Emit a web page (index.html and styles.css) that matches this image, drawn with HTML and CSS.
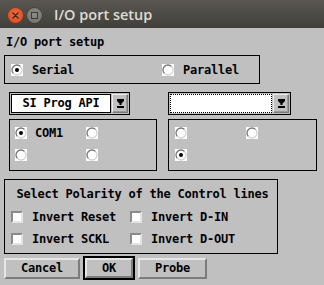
FILE: index.html
```html
<!DOCTYPE html>
<html>
<head>
<meta charset="utf-8">
<link rel="stylesheet" href="styles.css">
</head>
<body>
<div class="window">
  <div class="titlebar">
    <span class="wbtn close"><svg width="15" height="15" viewBox="0 0 15 15"><path d="M5 5L10 10M10 5L5 10" stroke="#3a2a22" stroke-width="1.4" stroke-linecap="round"/></svg></span>
    <span class="wbtn minim"><svg width="15" height="15" viewBox="0 0 15 15"><rect x="4.5" y="4.5" width="6" height="6" fill="none" stroke="#3c3b37" stroke-width="1"/></svg></span>
    <span class="title">I/O port setup</span>
  </div>
  <div class="content">
    <div class="heading">I/O port setup</div>

    <div class="frame serial-frame">
      <label class="opt"><span class="radio on"></span><span>Serial</span></label>
      <label class="opt"><span class="radio"></span><span>Parallel</span></label>
    </div>

    <div class="combo-row">
      <div class="combo c1">
        <div class="field">SI Prog API</div>
        <div class="arrow"><svg width="7" height="9" viewBox="0 0 7 9"><path d="M0 0H7V2L4.5 4.5V6H2.5V4.5L0 2Z" fill="#000"/><rect x="0" y="7" width="7" height="2" fill="#000"/></svg></div>
      </div>
      <div class="combo c2">
        <div class="field focus"></div>
        <div class="arrow"><svg width="7" height="9" viewBox="0 0 7 9"><path d="M0 0H7V2L4.5 4.5V6H2.5V4.5L0 2Z" fill="#000"/><rect x="0" y="7" width="7" height="2" fill="#000"/></svg></div>
      </div>
    </div>

    <div class="group-row">
      <div class="frame ports p1">
        <label class="opt"><span class="radio on"></span><span>COM1</span></label>
        <label class="opt"><span class="radio"></span></label>
        <label class="opt"><span class="radio"></span></label>
        <label class="opt"><span class="radio"></span></label>
      </div>
      <div class="frame ports p2">
        <label class="opt"><span class="radio"></span></label>
        <label class="opt"><span class="radio"></span></label>
        <label class="opt"><span class="radio on"></span></label>
      </div>
    </div>

    <div class="frame polarity">
      <div class="ptitle">Select Polarity of the Control lines</div>
      <div class="checks">
        <label class="opt"><span class="check"></span><span>Invert Reset</span></label>
        <label class="opt"><span class="check"></span><span>Invert D-IN</span></label>
        <label class="opt"><span class="check"></span><span>Invert SCKL</span></label>
        <label class="opt"><span class="check"></span><span>Invert D-OUT</span></label>
      </div>
    </div>

    <div class="buttons">
      <div class="btn cancel">Cancel</div>
      <div class="default"><div class="btn ok">OK</div></div>
      <div class="btn probe">Probe</div>
    </div>
  </div>
</div>
</body>
</html>
```

FILE: styles.css
```css
html, body {
  margin: 0;
  padding: 0;
}
body {
  width: 324px;
  height: 285px;
  overflow: hidden;
  background: #c0c0c0;
}
.window {
  width: 324px;
  height: 285px;
  background: #c0c0c0;
  font-family: "DejaVu Sans Mono", "Liberation Mono", monospace;
  font-weight: bold;
  font-size: 12px;
  letter-spacing: -0.22px;
  color: #000;
}
.titlebar {
  height: 28px;
  display: flex;
  align-items: center;
  background: linear-gradient(to bottom, #5a5751, #403f3b);
  box-sizing: border-box;
  padding-left: 8px;
}
.wbtn {
  width: 15px;
  height: 15px;
  border-radius: 50%;
  display: block;
  margin-top: 2px;
}
.wbtn svg { display: block; }
.close {
  background: radial-gradient(circle at 50% 40%, #f26b3d, #d5461c);
  box-shadow: 0 0 0 0.5px #8a3318;
}
.minim {
  margin-left: 4px;
  background: radial-gradient(circle at 50% 40%, #8e8c86, #6f6d68);
  box-shadow: 0 0 0 0.5px #3a3935;
}
.title {
  margin-left: 12px;
  margin-top: 1px;
  font-family: "Open Sans", "Noto Sans", sans-serif;
  font-weight: 600;
  font-size: 14.5px;
  letter-spacing: 0;
  color: #dfdbd2;
}
.heading {
  margin: 7px 0 0 6px;
  height: 14px;
  line-height: 14px;
}
.frame {
  border: 1px solid #000;
  box-sizing: border-box;
}
.opt {
  display: flex;
  align-items: center;
  height: 12px;
  line-height: 12px;
}
.radio {
  width: 12px;
  height: 12px;
  flex: none;
  background: url("data:image/svg+xml;utf8,<svg xmlns='http://www.w3.org/2000/svg' width='12' height='12' viewBox='0 0 12 12'><rect width='12' height='12' fill='%23fff'/><path d='M2.46 9.54A5 5 0 0 1 9.54 2.46' fill='none' stroke='%23767676' stroke-width='1.3'/><path d='M9.54 2.46A5 5 0 0 1 2.46 9.54' fill='none' stroke='%23d4d4d4' stroke-width='1.3'/></svg>") no-repeat;
}
.radio.on {
  background: url("data:image/svg+xml;utf8,<svg xmlns='http://www.w3.org/2000/svg' width='12' height='12' viewBox='0 0 12 12'><rect width='12' height='12' fill='%23fff'/><path d='M2.46 9.54A5 5 0 0 1 9.54 2.46' fill='none' stroke='%23767676' stroke-width='1.3'/><path d='M9.54 2.46A5 5 0 0 1 2.46 9.54' fill='none' stroke='%23d4d4d4' stroke-width='1.3'/><circle cx='6' cy='6' r='2' fill='%23000'/></svg>") no-repeat;
}
.opt .radio + span,
.opt .check + span {
  margin-left: 9px;
}
.serial-frame {
  margin: 6px 0 0 4px;
  width: 256px;
  height: 29px;
  display: grid;
  grid-template-columns: 151px auto;
  align-items: center;
  padding-left: 6px;
}
.combo-row {
  margin-top: 8px;
  display: flex;
  padding-left: 9px;
  gap: 38px;
  height: 23px;
}
.combo {
  border: 1px solid #000;
  box-sizing: border-box;
  height: 23px;
  padding: 1px;
  display: flex;
  gap: 1px;
}
.c1 { width: 121px; }
.c2 { width: 123px; }
.field {
  box-sizing: border-box;
  height: 19px;
  background: #fff;
  border: 1px solid #000;
  text-align: center;
  line-height: 17px;
  width: 100px;
}
.c2 .field { width: 102px; }
.field.focus {
  border: 1px dotted #000;
}
.arrow {
  width: 16px;
  height: 19px;
  box-sizing: border-box;
  border: 1px solid;
  border-color: #ececec #7a7a7a #7a7a7a #ececec;
  box-shadow: inset -1px -1px #9a9a9a;
  display: flex;
  align-items: center;
  justify-content: center;
}
.arrow svg { display: block; }
.group-row {
  margin-top: 4px;
  display: flex;
  padding-left: 9px;
  gap: 11px;
}
.ports {
  height: 52px;
  display: grid;
  grid-template-columns: 71px auto;
  grid-auto-rows: 12px;
  row-gap: 10px;
  padding-top: 7px;
}
.p1 { width: 148px; padding-left: 5px; }
.p2 { width: 149px; padding-left: 6px; }
.p1 .radio + span { margin-left: 8px; }
.polarity {
  margin: 8px 0 0 4px;
  width: 274px;
  height: 75px;
  padding-top: 7px;
}
.ptitle {
  height: 14px;
  line-height: 14px;
  text-align: center;
  padding-left: 3px;
}
.checks {
  margin-top: 10px;
  display: grid;
  grid-template-columns: 119px auto;
  grid-auto-rows: 12px;
  row-gap: 10px;
  padding-left: 6px;
}
.check {
  width: 12px;
  height: 12px;
  flex: none;
  box-sizing: border-box;
  background: #fff;
  border: 2px solid;
  border-color: #8a8a8a #e4e4e4 #e4e4e4 #8a8a8a;
}
.buttons {
  margin-top: 2px;
  display: flex;
  align-items: center;
  padding-left: 4px;
  gap: 3px;
  height: 24px;
}
.btn {
  box-sizing: border-box;
  height: 21px;
  line-height: 17px;
  text-align: center;
  background: #c0c0c0;
  border: 2px solid;
  border-color: #e6e6e6 #7c7c7c #7c7c7c #e6e6e6;
}
.cancel { width: 76px; }
.probe { width: 69px; }
.default {
  box-sizing: border-box;
  width: 52px;
  height: 24px;
  border: 2px solid #000;
  padding: 0;
}
.default .ok {
  height: 20px;
  line-height: 16px;
}
```
